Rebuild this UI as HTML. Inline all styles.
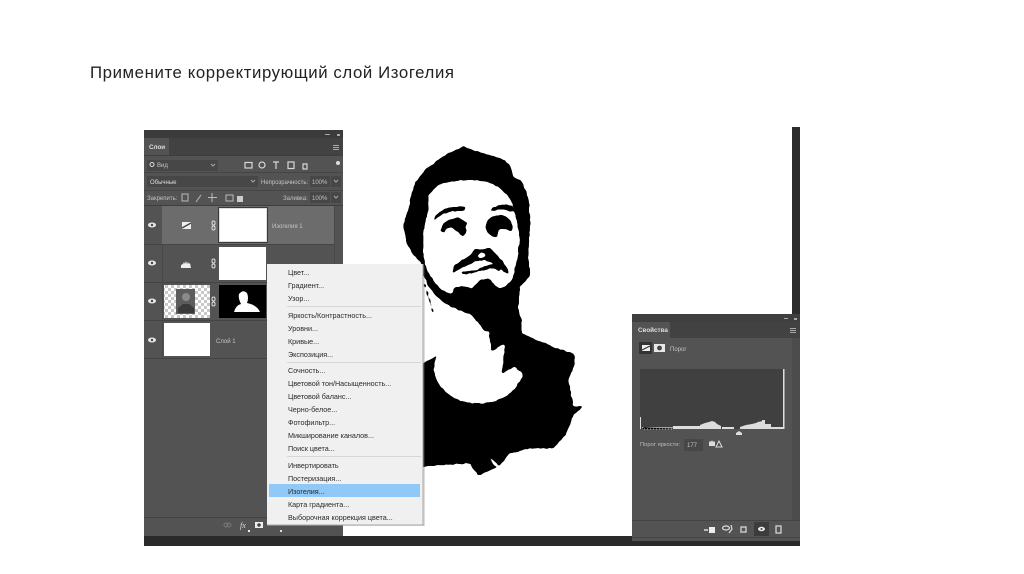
<!DOCTYPE html>
<html lang="ru">
<head>
<meta charset="utf-8">
<title>Изогелия</title>
<style>
html,body{margin:0;padding:0;background:#fff;width:1024px;height:574px;overflow:hidden}
svg{display:block}
text{font-family:"Liberation Sans",sans-serif}
.m{font-size:7.2px;fill:#2a2a2a}
.p{font-size:6px;fill:#c4c4c4}
</style>
</head>
<body>
<svg width="1024" height="574" viewBox="0 0 1024 574" xmlns="http://www.w3.org/2000/svg">
<defs>
<pattern id="ch" width="6" height="6" patternUnits="userSpaceOnUse"><rect width="6" height="6" fill="#fff"/><rect width="3" height="3" fill="#c8c8c8"/><rect x="3" y="3" width="3" height="3" fill="#c8c8c8"/></pattern>
<filter id="org" filterUnits="userSpaceOnUse" x="395" y="135" width="200" height="350" color-interpolation-filters="sRGB">
<feTurbulence type="fractalNoise" baseFrequency=".35" numOctaves="2" seed="4" result="n"/>
<feDisplacementMap in="SourceGraphic" in2="n" scale="3" xChannelSelector="R" yChannelSelector="G" result="d"/>
<feGaussianBlur in="d" stdDeviation="1.1"/>
<feComponentTransfer>
<feFuncR type="linear" slope="9" intercept="-4"/>
<feFuncG type="linear" slope="9" intercept="-4"/>
<feFuncB type="linear" slope="9" intercept="-4"/>
</feComponentTransfer>
<feGaussianBlur stdDeviation=".25"/>
</filter>
<filter id="soft" filterUnits="userSpaceOnUse" x="0" y="0" width="1024" height="574" color-interpolation-filters="sRGB">
<feGaussianBlur stdDeviation=".35"/>
</filter>
</defs>
<rect width="1024" height="574" fill="#fff"/>
<text x="90" y="78" font-size="16.800" fill="#222" textLength="364" lengthAdjust="spacing">Примените корректирующий слой Изогелия</text>

<!-- canvas edges -->
<rect x="792" y="127" width="8" height="190" fill="#2c2c2c"/>
<rect x="144" y="536" width="656" height="10" fill="#2a2a2a"/>

<g filter="url(#org)">
<rect x="395" y="135" width="200" height="350" fill="#fff"/>
<!-- portrait head -->
<g transform="translate(395 140) scale(.33333)">
<path fill="#000" d="M205 20L228 28L250 35L300 50L330 62L347 78L355 110L380 125L395 155L402 185L407 250L402 300L400 350L405 410L375 440L370 500L382 575L270 575L230 525L190 510L150 490L120 465L100 440L85 400L80 370L55 345L35 310L25 250L40 210L48 165L62 125L90 90L125 62L160 40Z"/>
<path fill="#fff" d="M100 165L130 135L165 125L200 120L245 120L285 127L315 145L340 170L355 195L365 240L375 300L370 335L365 365L352 420L330 440L310 445L282 415L255 420L230 447L205 438L180 440L170 462L140 450L118 425L100 400L90 375L85 340L85 280L92 240L100 210Z"/>
<path fill="#000" d="M110 248L125 222L150 206L185 200L210 200L212 212L172 214L145 222L125 235Z"/>
<path fill="#000" d="M278 217L295 202L320 193L350 197L358 216L320 208L295 212Z"/>
<path fill="#000" d="M135 272L145 250L165 238L190 234L218 248L212 258L215 275L205 292L192 280L170 262L155 265L145 280Z"/>
<path fill="#000" d="M272 262L280 238L300 226L325 225L345 240L354 258L350 276L325 265L310 270L308 292L290 290L278 278Z"/>
<path fill="#000" d="M172 402L176 380L200 360L228 345L238 325L262 328L285 322L300 340L322 360L335 382L347 406L322 392L300 372L272 360L240 365L215 376L192 388Z"/>
<path fill="#fff" d="M245 347L262 337L276 345L258 354Z"/>
<path fill="#000" d="M196 397L240 390L290 372L306 376L318 396L290 384L240 398L205 404Z"/>
<path fill="none" stroke="#000" stroke-width="5" d="M88 430L100 470L115 520"/>
<path fill="#000" d="M90 410L130 460L110 450Z"/>
</g>
<!-- portrait body -->
<g transform="translate(410 320) scale(.33333)">
<path fill="#000" d="M200 -5L335 -5L335 40L370 55L440 85L492 100L495 130L475 180L490 260L524 256L490 285L470 340L430 385L360 385L300 400L265 440L205 468L180 430L100 435L30 440L30 135L82 105L70 150L82 185L105 215L140 238L175 248L215 250L255 243L290 228L320 200L340 165L315 140L275 160L285 70L245 95L235 30Z"/>
<path fill="#fff" d="M225 390L245 415L268 440L250 435Z"/>
</g>
</g>

<g filter="url(#soft)">
<!-- layers panel -->
<rect x="144" y="130" width="199" height="406" fill="#535353"/>
<rect x="144" y="130" width="199" height="8" fill="#3b3b3b"/>
<rect x="144" y="138" width="199" height="17" fill="#424242"/>
<rect x="144" y="138" width="25" height="17" fill="#535353"/>
<text x="149" y="149" font-size="6.300" font-weight="bold" fill="#ddd">Слои</text>
<g fill="#aaa"><rect x="333" y="145" width="6" height="1"/><rect x="333" y="147" width="6" height="1"/><rect x="333" y="149" width="6" height="1"/><rect x="325" y="134" width="5" height="1"/><rect x="337" y="134" width="3" height="2"/></g>
<rect x="144" y="155" width="199" height="1" fill="#3e3e3e"/>

<rect x="147" y="160" width="71" height="11" fill="#474747"/>
<circle cx="152" cy="164.500" r="2" fill="none" stroke="#ddd"/>
<text x="157" y="167" class="p" fill="#ccc">Вид</text>
<path d="M211 164l2 2 2-2" fill="none" stroke="#aaa"/>
<g fill="none" stroke="#d8d8d8" stroke-width="1.200">
<rect x="245" y="162.500" width="7" height="5.500"/>
<circle cx="262" cy="165" r="3"/>
<path d="M273 162h6M276 162v7"/>
<rect x="288" y="162" width="6" height="6.500"/>
<path d="M303 169v-5h4v5z"/>
</g>
<circle cx="338" cy="163" r="2" fill="#ddd"/>
<rect x="144" y="172" width="199" height="1" fill="#454545"/>

<rect x="147" y="176" width="111" height="11" fill="#474747"/>
<text x="150" y="184" font-size="6" fill="#dcdcdc">Обычные</text>
<path d="M251 180l2 2 2-2" fill="none" stroke="#aaa"/>
<text x="261" y="184" class="p" fill="#aaa">Непрозрачность:</text>
<rect x="310" y="176" width="20" height="11" fill="#474747"/>
<text x="312" y="184" class="p">100%</text>
<rect x="331" y="176" width="10" height="11" fill="#474747"/>
<path d="M334 180l2 2 2-2" fill="none" stroke="#aaa"/>
<rect x="144" y="190" width="199" height="1" fill="#454545"/>

<text x="147" y="200" class="p" fill="#aaa">Закрепить:</text>
<g fill="none" stroke="#bbb" stroke-width="1">
<rect x="182" y="194" width="6" height="7"/>
<path d="M196 202l5-7"/>
<path d="M212 193v9M208 197.500h9"/>
<rect x="226" y="195" width="7" height="6"/>
</g>
<rect x="237" y="196" width="6" height="6" fill="#ccc"/>
<text x="283" y="200" class="p" fill="#aaa">Заливка:</text>
<rect x="310" y="192" width="20" height="11" fill="#474747"/>
<text x="312" y="200" class="p">100%</text>
<rect x="331" y="192" width="10" height="11" fill="#474747"/>
<path d="M334 196l2 2 2-2" fill="none" stroke="#aaa"/>

<!-- layer rows -->
<rect x="144" y="205" width="199" height="1" fill="#3e3e3e"/>
<rect x="162" y="206" width="172" height="38" fill="#6c6c6c"/>
<rect x="144" y="244" width="190" height="1" fill="#444"/>
<rect x="144" y="282" width="190" height="1" fill="#444"/>
<rect x="144" y="320" width="190" height="1" fill="#444"/>
<rect x="144" y="358" width="190" height="1" fill="#444"/>
<rect x="162" y="244" width="1" height="114" fill="#484848"/>
<rect x="334" y="206" width="1" height="312" fill="#484848"/>

<g fill="#e8e8e8">
<ellipse cx="152" cy="225" rx="4" ry="2.500"/>
<ellipse cx="152" cy="263" rx="4" ry="2.500"/>
<ellipse cx="152" cy="301" rx="4" ry="2.500"/>
<ellipse cx="152" cy="340" rx="4" ry="2.500"/>
</g>
<g fill="#444"><circle cx="152" cy="225" r="1.200"/><circle cx="152" cy="263" r="1.200"/><circle cx="152" cy="301" r="1.200"/><circle cx="152" cy="340" r="1.200"/></g>

<rect x="182" y="222" width="9" height="7" fill="#eee"/>
<path d="M182 228l9-5" stroke="#444" stroke-width="1.300"/>
<path d="M181 268v-3l2-1 1-2 1 2 1-3 1 3 1-2 1 2 1-1 1 5z" fill="#eee"/>
<g fill="none" stroke="#ddd" stroke-width="1">
<rect x="212" y="221" width="3" height="4" rx="1.500"/><rect x="212" y="226" width="3" height="4" rx="1.500"/>
<rect x="212" y="259" width="3" height="4" rx="1.500"/><rect x="212" y="264" width="3" height="4" rx="1.500"/>
<rect x="212" y="297" width="3" height="4" rx="1.500"/><rect x="212" y="302" width="3" height="4" rx="1.500"/>
</g>

<rect x="218" y="207" width="50" height="36" fill="#3a3a3a"/>
<rect x="219" y="208" width="48" height="34" fill="#ddd"/>
<rect x="220" y="209" width="46" height="32" fill="#fff"/>
<text x="272" y="228" class="p" fill="#ddd">Изогелия 1</text>

<rect x="219" y="247" width="47" height="33" fill="#fff"/>

<rect x="164" y="285" width="46" height="33" fill="url(#ch)"/>
<rect x="176" y="289" width="19" height="25" fill="#5c5c5c"/>
<circle cx="186" cy="297" r="4" fill="#8a8a8a"/>
<path d="M178 313v-5l5-4h6l5 4v5z" fill="#3a3a3a"/>
<rect x="219" y="285" width="47" height="33" fill="#000"/>
<path d="M234 312Q236 305 241 304Q238 298 239 294Q243 289 247 293Q249 298 247 303Q257 305 260 312Z" fill="#fff"/>

<rect x="164" y="323" width="46" height="33" fill="#fff"/>
<text x="216" y="343" class="p" fill="#ddd">Слой 1</text>

<!-- layers bottom bar -->
<rect x="144" y="517" width="199" height="1" fill="#444"/>
<g fill="none" stroke="#777"><circle cx="226" cy="525" r="2"/><circle cx="229" cy="525" r="2"/></g>
<text x="240" y="528" font-size="8" font-style="italic" fill="#ddd" style="font-family:'Liberation Serif',serif">fx</text>
<rect x="255" y="522" width="8" height="6" fill="#eee"/><circle cx="259" cy="525" r="1.800" fill="#444"/>
<rect x="248" y="530" width="2" height="2" fill="#eee"/>
<rect x="280" y="530" width="2" height="2" fill="#ddd"/>

<!-- adjustment menu -->
<rect x="268" y="266" width="157" height="260" fill="#777" opacity=".25"/>
<rect x="267" y="264" width="156" height="261" fill="#f0f0f0"/>
<rect x="422.500" y="264" width="1" height="261" fill="#a6a6a6"/>
<rect x="267" y="524.500" width="157" height="1" fill="#a6a6a6"/>
<g fill="#d6d6d6">
<rect x="287" y="306" width="134" height="1"/>
<rect x="287" y="362" width="134" height="1"/>
<rect x="287" y="456" width="134" height="1"/>
</g>
<rect x="269" y="484" width="151" height="13" fill="#90c8f8"/>
<g class="m">
<text class="m" x="288" y="275">Цвет...</text>
<text class="m" x="288" y="288">Градиент...</text>
<text class="m" x="288" y="301">Узор...</text>
<text class="m" x="288" y="318">Яркость/Контрастность...</text>
<text class="m" x="288" y="331">Уровни...</text>
<text class="m" x="288" y="344">Кривые...</text>
<text class="m" x="288" y="357">Экспозиция...</text>
<text class="m" x="288" y="373">Сочность...</text>
<text class="m" x="288" y="386">Цветовой тон/Насыщенность...</text>
<text class="m" x="288" y="399">Цветовой баланс...</text>
<text class="m" x="288" y="412">Черно-белое...</text>
<text class="m" x="288" y="425">Фотофильтр...</text>
<text class="m" x="288" y="438">Микширование каналов...</text>
<text class="m" x="288" y="451">Поиск цвета...</text>
<text class="m" x="288" y="468">Инвертировать</text>
<text class="m" x="288" y="481">Постеризация...</text>
<text class="m" x="288" y="494">Изогелия...</text>
<text class="m" x="288" y="507">Карта градиента...</text>
<text class="m" x="288" y="520">Выборочная коррекция цвета...</text>
</g>

<!-- properties panel -->
<rect x="632" y="314" width="168" height="227" fill="#535353"/>
<rect x="632" y="314" width="168" height="8" fill="#3f3f3f"/>
<rect x="632" y="322" width="168" height="16" fill="#424242"/>
<rect x="632" y="322" width="38" height="16" fill="#535353"/>
<text x="638" y="332" font-size="6.300" font-weight="bold" fill="#ddd">Свойства</text>
<g fill="#aaa"><rect x="790" y="328" width="6" height="1"/><rect x="790" y="330" width="6" height="1"/><rect x="790" y="332" width="6" height="1"/><rect x="784" y="318" width="4" height="1"/><rect x="794" y="318" width="3" height="2"/></g>
<rect x="639" y="342" width="13" height="12" fill="#333"/>
<rect x="642" y="345" width="8" height="6" fill="#eee"/>
<path d="M642 350l8-4" stroke="#333" stroke-width="1.200"/>
<rect x="654" y="344" width="11" height="8" fill="#e8e8e8"/>
<circle cx="659.500" cy="348" r="2.400" fill="#444"/>
<text x="670" y="351" class="p" fill="#bbb">Порог</text>
<rect x="792" y="338" width="8" height="182" fill="#4c4c4c"/>

<rect x="640" y="369" width="144" height="60" fill="#404040"/>
<rect x="783" y="369" width="1.500" height="60" fill="#ddd"/>
<path fill="#ddd" d="M640 417h1v12h-1zM642 427h31v.6h-31zM673 426h40v3h-40zM700 425l5-2 4-1 3-1 3 1 2 2 4 2v3h-21zM722 427h12v2h-12zM740 427l6-2 6-1 4-1 2-1 5-1v8h-23zM762 420h3v9h-3zM765 424h6v5h-6zM771 427h12v2h-12z"/>
<path stroke="#bbb" stroke-dasharray="1 2" d="M643 427v2h30"/>
<path d="M739 431l3 2v2h-6v-2z" fill="#ddd"/>
<text x="640" y="446" font-size="5.800" fill="#bbb">Порог яркости:</text>
<rect x="684" y="439" width="19" height="12" fill="#474747"/>
<text x="687" y="447" class="p" fill="#ddd">177</text>
<path d="M709 446v-4l1-1 1 1 1-2 1 2 1-1 1 1v4z" fill="#ddd"/>
<path d="M716 447l3-6 3 6z" fill="none" stroke="#ddd"/>

<rect x="632" y="520" width="168" height="1" fill="#444"/>
<rect x="632" y="537" width="168" height="1" fill="#444"/>
<rect x="754" y="522" width="15" height="14" fill="#3c3c3c"/>
<rect x="709" y="527" width="6" height="6" fill="#eee"/>
<rect x="704" y="529" width="4" height="2" fill="#bbb"/>
<g fill="none" stroke="#ddd" stroke-width="1.200">
<ellipse cx="726" cy="528" rx="3.500" ry="2"/>
<path d="M731 525l1 4-3 4"/>
<path d="M741 531v-4h5v5h-6"/>
<rect x="776" y="526" width="5" height="7"/>
</g>
<ellipse cx="761.500" cy="529" rx="3.500" ry="2.200" fill="#eee"/><circle cx="761.500" cy="529" r="1" fill="#3c3c3c"/>
</g>
</svg>
</body>
</html>
